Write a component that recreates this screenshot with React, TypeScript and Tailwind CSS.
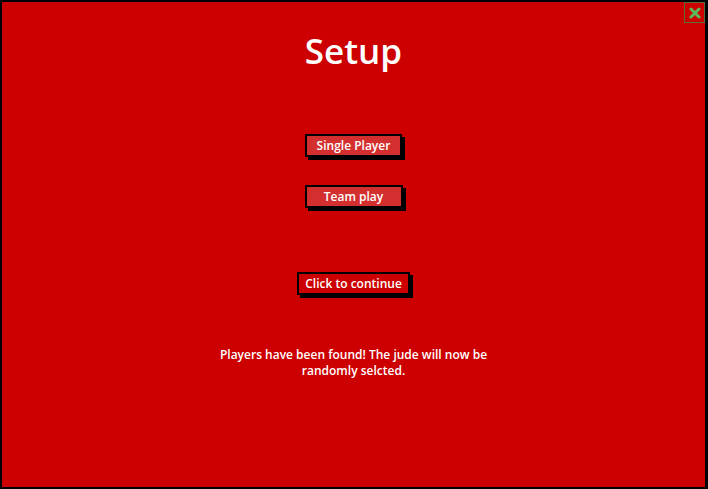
export default function App() {
  return (
    <div className="w-[708px] h-[489px] relative bg-[#cc0000] border-2 border-black border-r-[3px] flex flex-col items-center text-white font-['Open_Sans',sans-serif]">
      <button className="absolute top-0 right-0 w-[21px] h-[21px] border border-[#5b6b3a] flex items-center justify-center">
        <svg width="12" height="12" viewBox="0 0 12 12">
          <path d="M2 2 L10 10 M10 2 L2 10" stroke="#5cb85c" strokeWidth="3" strokeLinecap="round" />
        </svg>
      </button>

      <h1 className="mt-[27px] text-[35px] leading-[44px] font-semibold">Setup</h1>

      <button className="mt-[61px] w-[97px] h-[23px] bg-[#d32f2f] border-2 border-black shadow-[3px_3px_0_#000] text-[12px] font-semibold leading-none">
        Single Player
      </button>
      <button className="mt-[28px] w-[98px] h-[23px] bg-[#d32f2f] border-2 border-black shadow-[3px_3px_0_#000] text-[12px] font-semibold leading-none">
        Team play
      </button>

      <button className="mt-[64px] w-[113px] h-[23px] bg-[#cc0000] border-2 border-black shadow-[3px_3px_0_#000] text-[12px] font-semibold leading-none">
        Click to continue
      </button>

      <p className="mt-[52px] w-[285px] text-center text-[12px] font-semibold leading-[16px]">
        Players have been found! The jude will now be randomly selcted.
      </p>
    </div>
  );
}
